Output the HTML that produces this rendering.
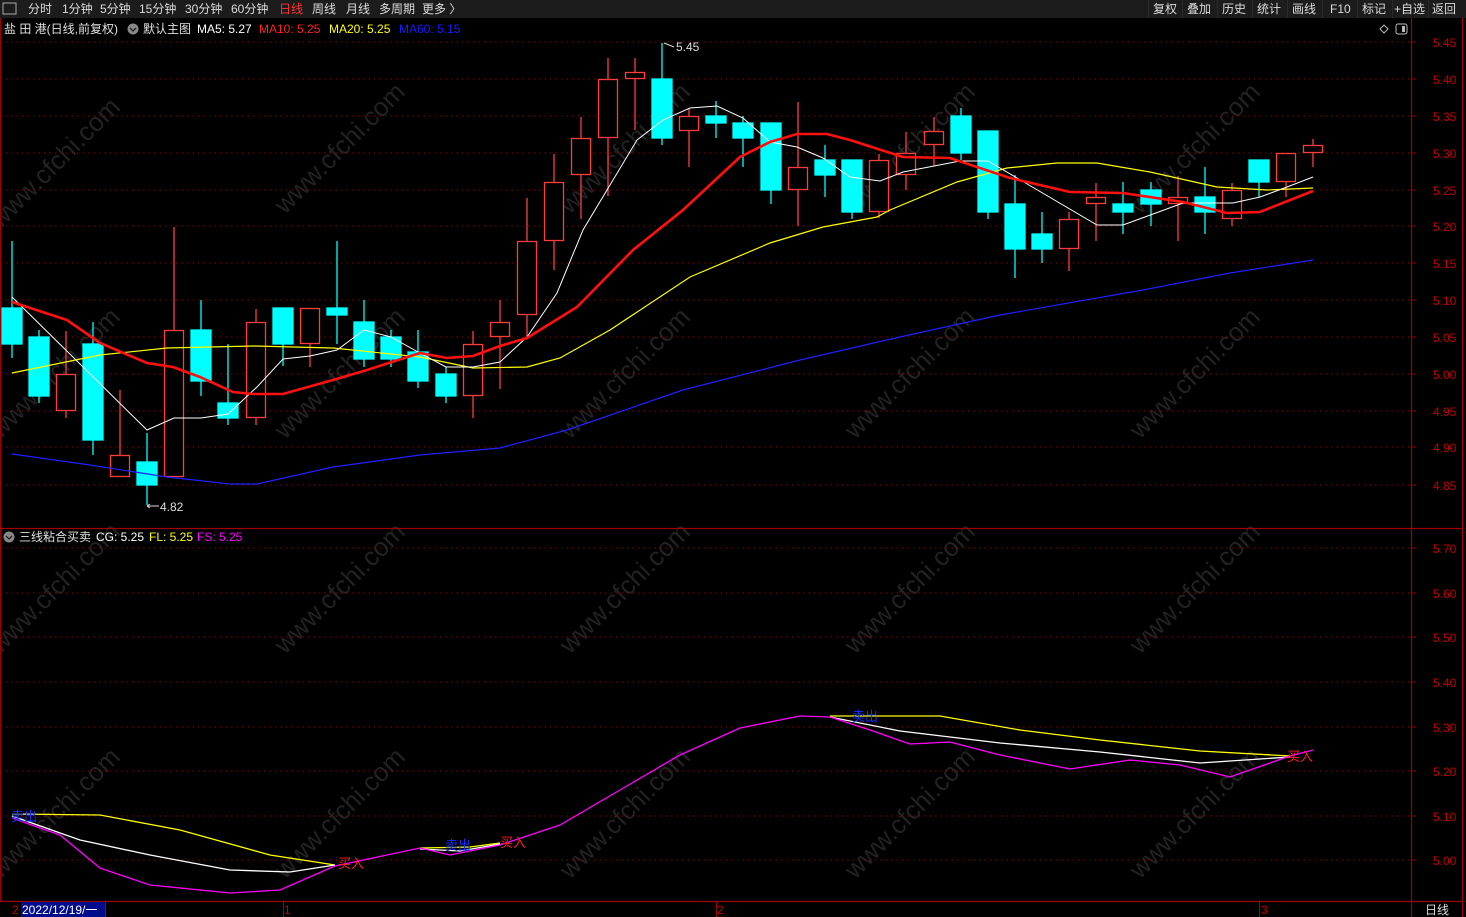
<!DOCTYPE html>
<html><head><meta charset="utf-8">
<style>
html,body{margin:0;padding:0;background:#000;width:1466px;height:917px;overflow:hidden}
svg{display:block}
text{font-family:"Liberation Sans","Noto Sans CJK SC",sans-serif}
</style></head><body>
<svg width="1466" height="917" viewBox="0 0 1466 917" xmlns="http://www.w3.org/2000/svg">
<rect width="1466" height="917" fill="#000"/>
<rect x="0" y="0" width="1466" height="18" fill="#1c1c1c"/>
<g font-size="12" fill="#dcdcdc">
<rect x="3" y="3" width="13" height="11" fill="none" stroke="#aaa"/>
<text x="28" y="13">分时</text><text x="62" y="13">1分钟</text><text x="100" y="13">5分钟</text><text x="139" y="13">15分钟</text><text x="185" y="13">30分钟</text><text x="231" y="13">60分钟</text>
<text x="279" y="13" fill="#ff3333">日线</text><text x="312" y="13">周线</text><text x="346" y="13">月线</text><text x="379" y="13">多周期</text><text x="422" y="13">更多 〉</text>
</g>
<g fill="#2a2a2a"><rect x="1148" y="0" width="1" height="18"/><rect x="1182" y="0" width="1" height="18"/><rect x="1217" y="0" width="1" height="18"/><rect x="1252" y="0" width="1" height="18"/><rect x="1287" y="0" width="1" height="18"/><rect x="1322" y="0" width="1" height="18"/><rect x="1357" y="0" width="1" height="18"/><rect x="1392" y="0" width="1" height="18"/><rect x="1428" y="0" width="1" height="18"/></g>
<g font-size="12" fill="#dcdcdc"><text x="1153" y="13">复权</text><text x="1187" y="13">叠加</text><text x="1222" y="13">历史</text><text x="1257" y="13">统计</text><text x="1292" y="13">画线</text><text x="1330" y="13">F10</text><text x="1362" y="13">标记</text><text x="1394" y="13">+自选</text><text x="1432" y="13">返回</text></g>
<g font-size="12">
<text x="4" y="33" fill="#e0e0e0">盐 田 港(日线,前复权)</text>
<circle cx="133" cy="29" r="5.5" fill="#888"/><path d="M130 28 l3 3 l3 -3" stroke="#222" fill="none" stroke-width="1.3"/>
<text x="143" y="33" fill="#e0e0e0">默认主图</text>
<text x="197" y="33" fill="#fff">MA5: 5.27</text>
<text x="259" y="33" fill="#ff2020">MA10: 5.25</text>
<text x="329" y="33" fill="#ffff00">MA20: 5.25</text>
<text x="399" y="33" fill="#1a1aff">MA60: 5.15</text>
</g>
<path d="M1384 25 l4 4 l-4 4 l-4 -4z" fill="none" stroke="#bbb"/>
<rect x="1396" y="24" width="11" height="10" rx="2" fill="none" stroke="#bbb"/><rect x="1402" y="26" width="3" height="6" fill="#bbb"/>
<g font-size="26" fill="#222" font-family="Liberation Sans">
<text transform="translate(0,230) rotate(-45)">www.cfchi.com</text>
<text transform="translate(285,215) rotate(-45)">www.cfchi.com</text>
<text transform="translate(570,215) rotate(-45)">www.cfchi.com</text>
<text transform="translate(855,215) rotate(-45)">www.cfchi.com</text>
<text transform="translate(1140,215) rotate(-45)">www.cfchi.com</text>
<text transform="translate(0,440) rotate(-45)">www.cfchi.com</text>
<text transform="translate(285,440) rotate(-45)">www.cfchi.com</text>
<text transform="translate(570,440) rotate(-45)">www.cfchi.com</text>
<text transform="translate(855,440) rotate(-45)">www.cfchi.com</text>
<text transform="translate(1140,440) rotate(-45)">www.cfchi.com</text>
<text transform="translate(0,655) rotate(-45)">www.cfchi.com</text>
<text transform="translate(285,655) rotate(-45)">www.cfchi.com</text>
<text transform="translate(570,655) rotate(-45)">www.cfchi.com</text>
<text transform="translate(855,655) rotate(-45)">www.cfchi.com</text>
<text transform="translate(1140,655) rotate(-45)">www.cfchi.com</text>
<text transform="translate(0,880) rotate(-45)">www.cfchi.com</text>
<text transform="translate(285,880) rotate(-45)">www.cfchi.com</text>
<text transform="translate(570,880) rotate(-45)">www.cfchi.com</text>
<text transform="translate(855,880) rotate(-45)">www.cfchi.com</text>
<text transform="translate(1140,880) rotate(-45)">www.cfchi.com</text>
</g>
<g stroke="#8b0000" stroke-dasharray="1.5,4" stroke-width="1">
<line x1="0" x2="1411" y1="42" y2="42"/><line x1="0" x2="1411" y1="79" y2="79"/><line x1="0" x2="1411" y1="116" y2="116"/><line x1="0" x2="1411" y1="153" y2="153"/><line x1="0" x2="1411" y1="190" y2="190"/><line x1="0" x2="1411" y1="226" y2="226"/><line x1="0" x2="1411" y1="263" y2="263"/><line x1="0" x2="1411" y1="300" y2="300"/><line x1="0" x2="1411" y1="337" y2="337"/><line x1="0" x2="1411" y1="374" y2="374"/><line x1="0" x2="1411" y1="411" y2="411"/><line x1="0" x2="1411" y1="447" y2="447"/><line x1="0" x2="1411" y1="485" y2="485"/>
<line x1="0" x2="1411" y1="548" y2="548"/><line x1="0" x2="1411" y1="593" y2="593"/><line x1="0" x2="1411" y1="637" y2="637"/><line x1="0" x2="1411" y1="682" y2="682"/><line x1="0" x2="1411" y1="727" y2="727"/><line x1="0" x2="1411" y1="771" y2="771"/><line x1="0" x2="1411" y1="816" y2="816"/><line x1="0" x2="1411" y1="860" y2="860"/>
</g>
<g stroke="#a00000" stroke-width="1.2" fill="none">
<line x1="1411.5" y1="18" x2="1411.5" y2="917"/>
<line x1="1462.5" y1="18" x2="1462.5" y2="917"/>
<line x1="0" y1="528.5" x2="1463" y2="528.5"/>
<line x1="0" y1="901.5" x2="1463" y2="901.5"/>
<line x1="0.5" y1="18" x2="0.5" y2="901"/>
</g>
<g stroke="#a00000"><line x1="1411" x2="1416" y1="42" y2="42"/><line x1="1411" x2="1416" y1="79" y2="79"/><line x1="1411" x2="1416" y1="116" y2="116"/><line x1="1411" x2="1416" y1="153" y2="153"/><line x1="1411" x2="1416" y1="190" y2="190"/><line x1="1411" x2="1416" y1="226" y2="226"/><line x1="1411" x2="1416" y1="263" y2="263"/><line x1="1411" x2="1416" y1="300" y2="300"/><line x1="1411" x2="1416" y1="337" y2="337"/><line x1="1411" x2="1416" y1="374" y2="374"/><line x1="1411" x2="1416" y1="411" y2="411"/><line x1="1411" x2="1416" y1="447" y2="447"/><line x1="1411" x2="1416" y1="485" y2="485"/>
<line x1="1411" x2="1416" y1="548" y2="548"/><line x1="1411" x2="1416" y1="593" y2="593"/><line x1="1411" x2="1416" y1="637" y2="637"/><line x1="1411" x2="1416" y1="682" y2="682"/><line x1="1411" x2="1416" y1="727" y2="727"/><line x1="1411" x2="1416" y1="771" y2="771"/><line x1="1411" x2="1416" y1="816" y2="816"/><line x1="1411" x2="1416" y1="860" y2="860"/></g>
<g font-size="12" fill="#c00000">
<text x="1433" y="47">5.45</text><text x="1433" y="84">5.40</text><text x="1433" y="121">5.35</text><text x="1433" y="158">5.30</text><text x="1433" y="195">5.25</text><text x="1433" y="231">5.20</text><text x="1433" y="268">5.15</text><text x="1433" y="305">5.10</text><text x="1433" y="342">5.05</text><text x="1433" y="379">5.00</text><text x="1433" y="416">4.95</text><text x="1433" y="452">4.90</text><text x="1433" y="490">4.85</text>
<text x="1433" y="553">5.70</text><text x="1433" y="598">5.60</text><text x="1433" y="642">5.50</text><text x="1433" y="687">5.40</text><text x="1433" y="732">5.30</text><text x="1433" y="776">5.20</text><text x="1433" y="821">5.10</text><text x="1433" y="865">5.00</text>
</g>
<g stroke-width="1.3">
<g stroke="#00ffff" fill="#00ffff">
<line x1="12" x2="12" y1="241" y2="358"/><rect x="2" y="308" width="20" height="36"/>
<line x1="39" x2="39" y1="330" y2="403"/><rect x="29" y="337" width="20" height="59"/>
<line x1="93" x2="93" y1="322" y2="455"/><rect x="83" y="344" width="20" height="96"/>
<line x1="147" x2="147" y1="433" y2="505"/><rect x="137" y="462" width="20" height="23"/>
<line x1="201" x2="201" y1="300" y2="396"/><rect x="191" y="330" width="20" height="51"/>
<line x1="228" x2="228" y1="344" y2="425"/><rect x="218" y="403" width="20" height="15"/>
<line x1="283" x2="283" y1="308" y2="366"/><rect x="273" y="308" width="20" height="36"/>
<line x1="337" x2="337" y1="241" y2="344"/><rect x="327" y="308" width="20" height="7"/>
<line x1="364" x2="364" y1="300" y2="367"/><rect x="354" y="322" width="20" height="37"/>
<line x1="391" x2="391" y1="330" y2="367"/><rect x="381" y="337" width="20" height="22"/>
<line x1="418" x2="418" y1="330" y2="388"/><rect x="408" y="352" width="20" height="29"/>
<line x1="446" x2="446" y1="367" y2="403"/><rect x="436" y="374" width="20" height="22"/>
<line x1="662" x2="662" y1="43" y2="145"/><rect x="652" y="79" width="20" height="59"/>
<line x1="716" x2="716" y1="101" y2="138"/><rect x="706" y="116" width="20" height="7"/>
<line x1="743" x2="743" y1="116" y2="167"/><rect x="733" y="123" width="20" height="15"/>
<line x1="771" x2="771" y1="123" y2="204"/><rect x="761" y="123" width="20" height="67"/>
<line x1="825" x2="825" y1="145" y2="197"/><rect x="815" y="160" width="20" height="15"/>
<line x1="852" x2="852" y1="160" y2="219"/><rect x="842" y="160" width="20" height="52"/>
<line x1="961" x2="961" y1="108" y2="160"/><rect x="951" y="116" width="20" height="37"/>
<line x1="988" x2="988" y1="131" y2="219"/><rect x="978" y="131" width="20" height="81"/>
<line x1="1015" x2="1015" y1="175" y2="278"/><rect x="1005" y="204" width="20" height="45"/>
<line x1="1042" x2="1042" y1="212" y2="263"/><rect x="1032" y="234" width="20" height="15"/>
<line x1="1123" x2="1123" y1="182" y2="234"/><rect x="1113" y="204" width="20" height="8"/>
<line x1="1151" x2="1151" y1="182" y2="226"/><rect x="1141" y="190" width="20" height="14"/>
<line x1="1205" x2="1205" y1="167" y2="234"/><rect x="1195" y="197" width="20" height="15"/>
<line x1="1259" x2="1259" y1="160" y2="197"/><rect x="1249" y="160" width="20" height="22"/>
</g>
<g stroke="#ff3c3c" fill="#000">
<line x1="66" x2="66" y1="331" y2="418"/><rect x="56.5" y="374.5" width="19" height="36"/>
<line x1="120" x2="120" y1="390" y2="477"/><rect x="110.5" y="455.5" width="19" height="21"/>
<line x1="174" x2="174" y1="227" y2="477"/><rect x="164.5" y="330.5" width="19" height="146"/>
<line x1="256" x2="256" y1="309" y2="425"/><rect x="246.5" y="322.5" width="19" height="95"/>
<line x1="310" x2="310" y1="308" y2="367"/><rect x="300.5" y="308.5" width="19" height="35"/>
<line x1="473" x2="473" y1="331" y2="418"/><rect x="463.5" y="344.5" width="19" height="51"/>
<line x1="500" x2="500" y1="300" y2="389"/><rect x="490.5" y="322.5" width="19" height="14"/>
<line x1="527" x2="527" y1="198" y2="337"/><rect x="517.5" y="241.5" width="19" height="73"/>
<line x1="554" x2="554" y1="154" y2="270"/><rect x="544.5" y="182.5" width="19" height="58"/>
<line x1="581" x2="581" y1="117" y2="219"/><rect x="571.5" y="138.5" width="19" height="36"/>
<line x1="608" x2="608" y1="58" y2="196"/><rect x="598.5" y="79.5" width="19" height="58"/>
<line x1="635" x2="635" y1="58" y2="130"/><rect x="625.5" y="72.5" width="19" height="6"/>
<line x1="689" x2="689" y1="108" y2="167"/><rect x="679.5" y="116.5" width="19" height="14"/>
<line x1="798" x2="798" y1="102" y2="226"/><rect x="788.5" y="167.5" width="19" height="22"/>
<line x1="879" x2="879" y1="154" y2="218"/><rect x="869.5" y="160.5" width="19" height="51"/>
<line x1="906" x2="906" y1="132" y2="190"/><rect x="896.5" y="153.5" width="19" height="21"/>
<line x1="934" x2="934" y1="117" y2="166"/><rect x="924.5" y="131.5" width="19" height="13"/>
<line x1="1069" x2="1069" y1="212" y2="271"/><rect x="1059.5" y="219.5" width="19" height="29"/>
<line x1="1096" x2="1096" y1="183" y2="241"/><rect x="1086.5" y="197.5" width="19" height="6"/>
<line x1="1178" x2="1178" y1="176" y2="241"/><rect x="1168.5" y="197.5" width="19" height="6"/>
<line x1="1232" x2="1232" y1="183" y2="226"/><rect x="1222.5" y="190.5" width="19" height="28"/>
<line x1="1286" x2="1286" y1="153" y2="197"/><rect x="1276.5" y="153.5" width="19" height="28"/>
<line x1="1313" x2="1313" y1="139" y2="167"/><rect x="1303.5" y="145.5" width="19" height="7"/>
</g>
</g>
<polyline fill="none" stroke="#2020ff" stroke-width="1.2" points="12,454 90,465 167,477 230,484 257,484 333,467 420,455 500,448 567,430 683,390 800,360 900,337 1000,315 1143,290 1230,273 1313,260"/>
<polyline fill="none" stroke="#ffff00" stroke-width="1.2" points="12,373 100,355 167,348 253,346 333,348 420,357 473,368 527,367 560,358 610,330 690,277 770,243 823,227 877,217 890,210 957,182 1007,168 1057,163 1097,163 1150,172 1217,187 1267,190 1313,188"/>
<polyline fill="none" stroke="#ffffff" stroke-width="1" points="12,297 147,430 174,418 201,418 228,414 257,387 283,359 310,356 337,350 364,330 391,337 418,352 446,367 473,367 500,362 527,337 557,293 583,230 607,190 637,140 663,120 690,108 717,106 743,118 770,142 797,147 823,158 850,177 880,181 903,172 960,161 988,161 1017,178 1097,225 1123,225 1183,203 1233,203 1260,197 1287,187 1313,177"/>
<polyline fill="none" stroke="#ff1010" stroke-width="2.6" points="12,302 67,320 100,343 147,363 173,367 200,377 233,392 253,394 283,394 333,380 367,370 420,353 447,358 473,356 500,346 527,338 577,307 633,250 683,210 740,157 770,142 797,134 827,134 850,140 903,157 950,158 1010,178 1070,192 1123,193 1183,202 1227,213 1260,212 1313,191"/>
<g font-size="12" fill="#ddd">
<path d="M664 43 l10 4" stroke="#ddd" fill="none"/><text x="676" y="51">5.45</text>
<path d="M147 506 h12 M147 506 l3 -2 M147 506 l3 2" stroke="#ddd" fill="none"/><text x="160" y="511">4.82</text>
</g>
<g font-size="12">
<circle cx="9" cy="537" r="5.5" fill="#888"/><path d="M6 536 l3 3 l3 -3" stroke="#222" fill="none" stroke-width="1.3"/>
<text x="19" y="541" fill="#e0e0e0">三线粘合买卖</text>
<text x="96" y="541" fill="#fff">CG: 5.25</text>
<text x="149" y="541" fill="#ffff00">FL: 5.25</text>
<text x="197" y="541" fill="#ff00ff">FS: 5.25</text>
</g>
<g fill="none" stroke-width="1.3">
<polyline stroke="#ffff00" points="12,814 100,815 180,830 270,855 335,865"/>
<polyline stroke="#ffff00" points="420,848 470,847 500,843"/>
<polyline stroke="#ffff00" points="830,716 940,716 1020,730 1100,740 1200,751 1290,756"/>
<polyline stroke="#ffffff" points="12,816 80,840 150,855 230,870 290,872 335,865"/>
<polyline stroke="#ffffff" points="420,849 460,851 500,844"/>
<polyline stroke="#ffffff" points="830,717 900,731 1000,743 1100,752 1200,763 1290,757"/>
<polyline stroke="#ff00ff" points="12,818 60,835 100,868 150,885 230,893 280,890 335,866 420,848 450,855 500,845 560,825 620,790 680,755 740,728 800,716 830,717 870,730 910,744 950,742 1000,755 1070,769 1130,760 1180,765 1230,777 1290,756 1313,750"/>
</g>
<g font-size="13">
<text x="11" y="821" fill="#1030ff">卖出</text>
<text x="445" y="850" fill="#1030ff">卖出</text>
<text x="852" y="721" fill="#1030ff">卖出</text>
<text x="338" y="868" fill="#ff2020">买入</text>
<text x="500" y="847" fill="#ff2020">买入</text>
<text x="1287" y="761" fill="#ff2020">买入</text>
</g>
<g font-size="12">
<text x="12" y="914" fill="#c00000">2</text>
<rect x="21" y="902" width="84" height="15" fill="#000c8c"/>
<text x="22" y="914" fill="#fff">2022/12/19/一</text>
<line x1="105.5" y1="902" x2="105.5" y2="917" stroke="#a00000"/>
<line x1="283.5" y1="902" x2="283.5" y2="917" stroke="#a00000"/><text x="284" y="914" fill="#c00000">1</text>
<line x1="716.5" y1="902" x2="716.5" y2="917" stroke="#a00000"/><text x="717" y="914" fill="#c00000">2</text>
<line x1="1259.5" y1="902" x2="1259.5" y2="917" stroke="#a00000"/><text x="1261" y="914" fill="#c00000">3</text>
<text x="1425" y="914" fill="#ddd">日线</text>
</g>
</svg>
</body></html>
